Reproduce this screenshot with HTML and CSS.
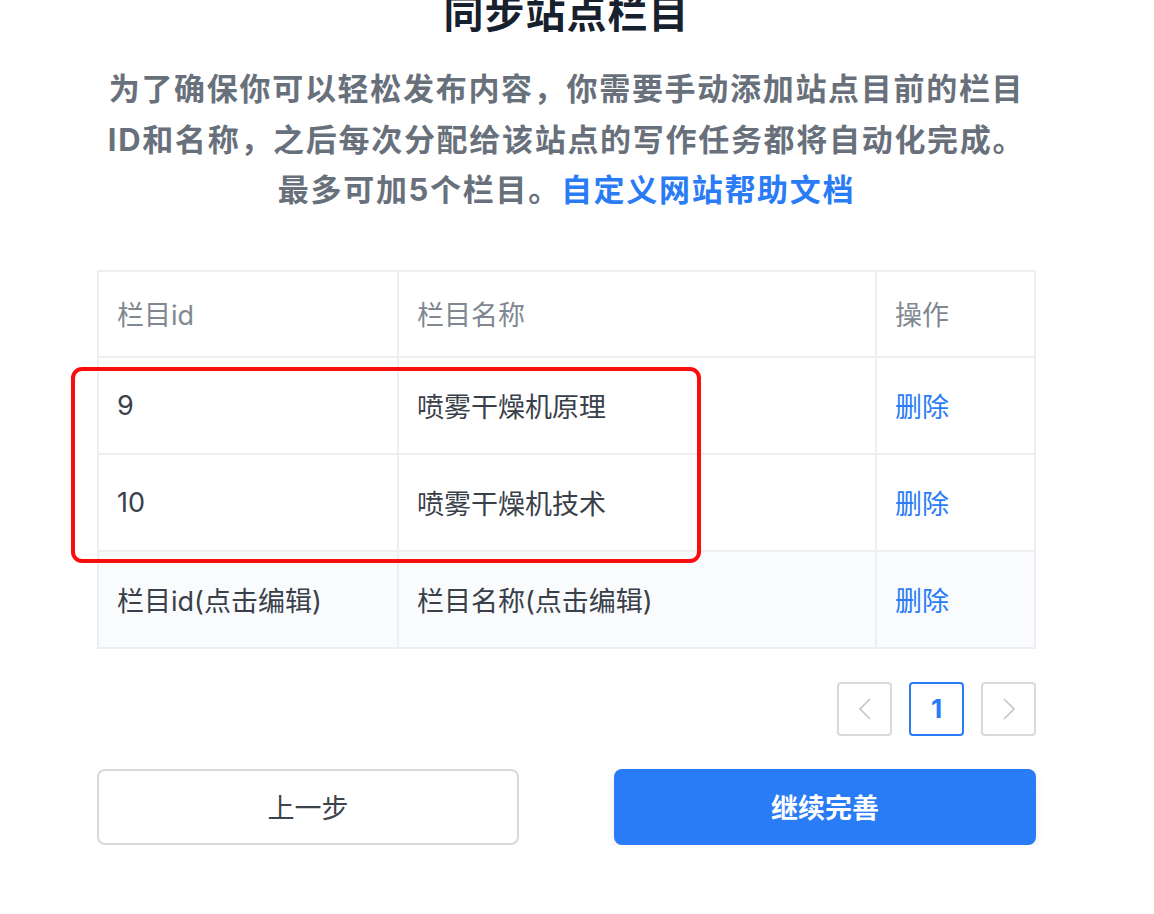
FILE: index.html
```html
<!DOCTYPE html>
<html lang="zh-CN">
<head>
    <meta charset="UTF-8">
    <meta name="viewport" content="width=device-width, initial-scale=1.0">
    <title>同步站点栏目</title>
    <link rel="stylesheet" href="styles.css">
</head>
<body>
    <div class="pagina">
        <h1 class="titulo">同步站点栏目</h1>
        <p class="descricao">为了确保你可以轻松发布内容，你需要手动添加站点目前的栏目<br>ID和名称，之后每次分配给该站点的写作任务都将自动化完成。<br>最多可加5个栏目。<a href="#" class="ajuda">自定义网站帮助文档</a></p>

        <div class="tabela-box">
            <table class="tabela">
                <thead>
                    <tr>
                        <th class="col-id">栏目id</th>
                        <th class="col-nome">栏目名称</th>
                        <th class="col-acao">操作</th>
                    </tr>
                </thead>
                <tbody>
                    <tr>
                        <td>9</td>
                        <td>喷雾干燥机原理</td>
                        <td><a href="#" class="apagar">删除</a></td>
                    </tr>
                    <tr>
                        <td>10</td>
                        <td>喷雾干燥机技术</td>
                        <td><a href="#" class="apagar">删除</a></td>
                    </tr>
                    <tr class="editavel">
                        <td>栏目id(点击编辑)</td>
                        <td>栏目名称(点击编辑)</td>
                        <td><a href="#" class="apagar">删除</a></td>
                    </tr>
                </tbody>
            </table>
            <div class="marcacao"></div>
        </div>

        <div class="paginacao">
            <button class="pag-btn">
                <svg width="14" height="22" viewBox="0 0 14 22"><path d="M12 1 L2 11 L12 21" fill="none" stroke="#c4c4c4" stroke-width="1.6"/></svg>
            </button>
            <button class="pag-btn ativo">1</button>
            <button class="pag-btn">
                <svg width="14" height="22" viewBox="0 0 14 22"><path d="M2 1 L12 11 L2 21" fill="none" stroke="#c4c4c4" stroke-width="1.6"/></svg>
            </button>
        </div>

        <div class="acoes">
            <button class="btn-voltar">上一步</button>
            <button class="btn-continuar">继续完善</button>
        </div>
    </div>
</body>
</html>
```

FILE: styles.css
```css
body {
    margin: 0;
    background-color: #ffffff;
    font-family: Inter, "Noto Sans CJK SC", sans-serif;
}
.pagina {
    width: 939px;
    margin-left: 97px;
}
.titulo {
    margin: -14px 0 0 0;
    font-size: 40px;
    line-height: 56px;
    font-weight: bold;
    color: #17212e;
    text-align: center;
    letter-spacing: 1px;
}
.descricao {
    margin: 22px 0 0 0;
    font-size: 31px;
    line-height: 50.5px;
    font-weight: bold;
    color: #68717b;
    text-align: center;
    letter-spacing: 1.7px;
    white-space: nowrap;
}
.ajuda {
    color: #2a7cf6;
    text-decoration: none;
}
.tabela-box {
    position: relative;
    margin-top: 54px;
}
.tabela {
    width: 100%;
    border-collapse: collapse;
    border: 2px solid #eceef2;
    font-size: 27px;
}
.tabela th, .tabela td {
    border: 2px solid #eceef2;
    text-align: left;
    padding: 0 0 0 18px;
}
.tabela th {
    height: 84px;
    font-weight: normal;
    color: #7f8891;
}
.tabela td {
    height: 95px;
    color: #394049;
}
.col-id { width: 280px; }
.col-nome { width: 458px; }
.editavel td {
    background-color: #fafbfd;
}
.apagar {
    color: #2a7cf6;
    text-decoration: none;
}
/* anotação vermelha por cima da tabela */
.marcacao {
    position: absolute;
    left: -26px;
    top: 97px;
    width: 622px;
    height: 188px;
    border: 4px solid #fb0d0d;
    border-radius: 11px;
}
.paginacao {
    display: flex;
    justify-content: flex-end;
    gap: 17px;
    margin-top: 33px;
}
.pag-btn {
    width: 55px;
    height: 54px;
    border: 2px solid #dadada;
    border-radius: 4px;
    background: #ffffff;
    display: flex;
    align-items: center;
    justify-content: center;
    padding: 0;
    font-family: Inter, sans-serif;
}
.pag-btn.ativo {
    border-color: #2a7cf6;
    color: #2a7cf6;
    font-size: 26px;
    font-weight: bold;
}
.acoes {
    display: flex;
    justify-content: space-between;
    margin-top: 33px;
}
.acoes button {
    width: 422px;
    height: 76px;
    border-radius: 8px;
    font-size: 27px;
    font-family: "Noto Sans CJK SC", sans-serif;
    cursor: pointer;
}
.btn-voltar {
    background: #ffffff;
    border: 2px solid #d9d9d9;
    color: #3d444c;
}
.btn-continuar {
    background: #2a7bf6;
    border: none;
    color: #ffffff;
    font-weight: bold;
    font-size: 28px;
    box-shadow: 0 4px 10px rgba(0, 0, 0, 0.08);
}
```
